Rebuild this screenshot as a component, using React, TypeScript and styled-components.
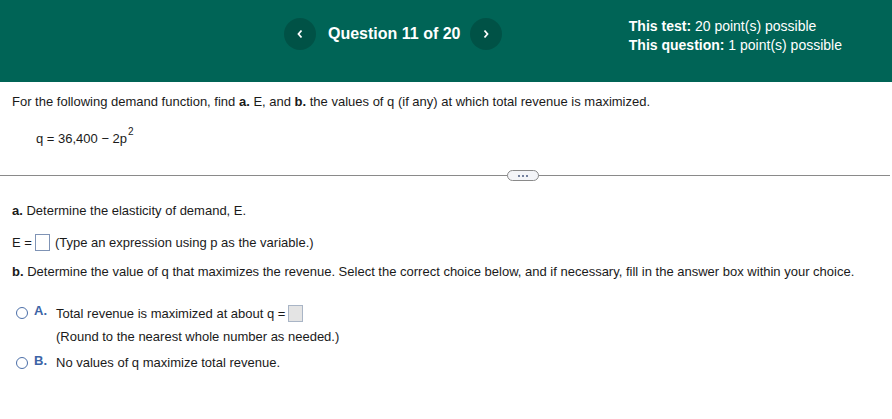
import styled, { createGlobalStyle } from "styled-components";

const GlobalStyle = createGlobalStyle`
  html, body {
    margin: 0;
    padding: 0;
    background: #ffffff;
  }
  body {
    font-family: "Liberation Sans", Arial, sans-serif;
    color: #1a1a1a;
  }
`;

const Page = styled.div`
  width: 892px;
  height: 419px;
  overflow: hidden;
  background: #ffffff;
`;

const Header = styled.header`
  height: 82px;
  background: #006456;
  display: flex;
  align-items: flex-start;
  color: #ffffff;
`;

const Nav = styled.div`
  display: flex;
  align-items: center;
  margin-left: 284px;
  margin-top: 18px;
`;

const CircleButton = styled.button`
  width: 32px;
  height: 32px;
  border-radius: 50%;
  border: none;
  background: rgba(0, 0, 0, 0.18);
  color: #ffffff;
  display: flex;
  align-items: center;
  justify-content: center;
  padding: 0;
  cursor: pointer;
`;

const QuestionTitle = styled.h1`
  margin: 0 10px 0 12px;
  font-size: 16px;
  font-weight: 700;
  letter-spacing: 0;
`;

const Points = styled.div`
  margin-left: auto;
  margin-right: 50px;
  margin-top: 17px;
  font-size: 14px;
  line-height: 19px;

  b {
    font-weight: 700;
  }
`;

const Body = styled.main`
  padding: 12px 0 0 12px;
  font-size: 13px;
`;

const Para = styled.p<{ $top?: number; $indent?: number }>`
  margin: ${(p) => p.$top ?? 0}px 0 0 ${(p) => p.$indent ?? 0}px;
  line-height: 16px;
  display: flex;
  align-items: center;
`;

const Sup = styled.span`
  font-size: 10px;
  position: relative;
  top: -7px;
  margin-left: 1px;
`;

const Divider = styled.div`
  margin: 28px 0 0 -12px;
  height: 1px;
  background: #8a8a8a;
  position: relative;
  width: 890px;
`;

const Pill = styled.span`
  position: absolute;
  left: 507px;
  top: -5px;
  width: 30px;
  height: 9px;
  border: 1px solid #8a8a8a;
  border-radius: 6px;
  background: #f4f5f8;
  display: flex;
  align-items: center;
  justify-content: center;
  gap: 2px;

  i {
    width: 2px;
    height: 2px;
    background: #4a5a80;
    border-radius: 1px;
  }
`;

const AnswerBox = styled.span<{ $filled?: boolean }>`
  display: inline-block;
  width: 15px;
  height: 17px;
  border: 1px solid ${(p) => (p.$filled ? "#a9b5c6" : "#7f93b5")};
  background: ${(p) => (p.$filled ? "#e4e4e4" : "#ffffff")};
  margin: 0 5px 0 3px;
  box-sizing: border-box;
`;

const Choice = styled.div<{ $top: number }>`
  display: grid;
  grid-template-columns: 14px 28px auto;
  margin: ${(p) => p.$top}px 0 0 4px;
  line-height: 16px;
  align-items: start;
`;

const Radio = styled.span`
  width: 12px;
  height: 12px;
  border: 1px solid #4c6fa8;
  border-radius: 50%;
  box-sizing: border-box;
  margin-top: 2px;
`;

const Letter = styled.span`
  font-weight: 700;
  color: #3c64a6;
  padding-left: 4px;
  font-size: 13px;
  position: relative;
  top: -2px;
`;

const ChoiceText = styled.div`
  display: flex;
  flex-direction: column;
  gap: 7px;
  margin-left: -2px;

  span {
    display: flex;
    align-items: center;
  }
`;

export default function App() {
  return (
    <Page>
      <GlobalStyle />
      <Header>
        <Nav>
          <CircleButton aria-label="Previous question">
            <svg width="8" height="10" viewBox="0 0 8 10">
              <path d="M5.5 1.5 L2.5 5 L5.5 8.5" fill="none" stroke="#fff" strokeWidth="1.8" />
            </svg>
          </CircleButton>
          <QuestionTitle>Question 11 of 20</QuestionTitle>
          <CircleButton aria-label="Next question">
            <svg width="8" height="10" viewBox="0 0 8 10">
              <path d="M2.5 1.5 L5.5 5 L2.5 8.5" fill="none" stroke="#fff" strokeWidth="1.8" />
            </svg>
          </CircleButton>
        </Nav>
        <Points>
          <div>
            <b>This test:</b> 20 point(s) possible
          </div>
          <div>
            <b>This question:</b> 1 point(s) possible
          </div>
        </Points>
      </Header>
      <Body>
        <Para $top={0}>
          For the following demand function, find&nbsp;<b>a.</b>&nbsp;E, and&nbsp;<b>b.</b>&nbsp;the values of q (if any) at which total revenue is maximized.
        </Para>
        <Para $top={21} $indent={24}>
          q = 36,400 − 2p<Sup>2</Sup>
        </Para>
        <Divider>
          <Pill>
            <i />
            <i />
            <i />
          </Pill>
        </Divider>
        <Para $top={27}>
          <b>a.</b>&nbsp;Determine the elasticity of demand, E.
        </Para>
        <Para $top={15}>
          E =<AnswerBox />(Type an expression using p as the variable.)
        </Para>
        <Para $top={13}>
          <b>b.</b>&nbsp;Determine the value of q that maximizes the revenue. Select the correct choice below, and if necessary, fill in the answer box within your choice.
        </Para>
        <Choice $top={25}>
          <Radio />
          <Letter>A.</Letter>
          <ChoiceText>
            <span>
              Total revenue is maximized at about q =<AnswerBox $filled />
            </span>
            <span>(Round to the nearest whole number as needed.)</span>
          </ChoiceText>
        </Choice>
        <Choice $top={10}>
          <Radio />
          <Letter>B.</Letter>
          <ChoiceText>
            <span>No values of q maximize total revenue.</span>
          </ChoiceText>
        </Choice>
      </Body>
    </Page>
  );
}
